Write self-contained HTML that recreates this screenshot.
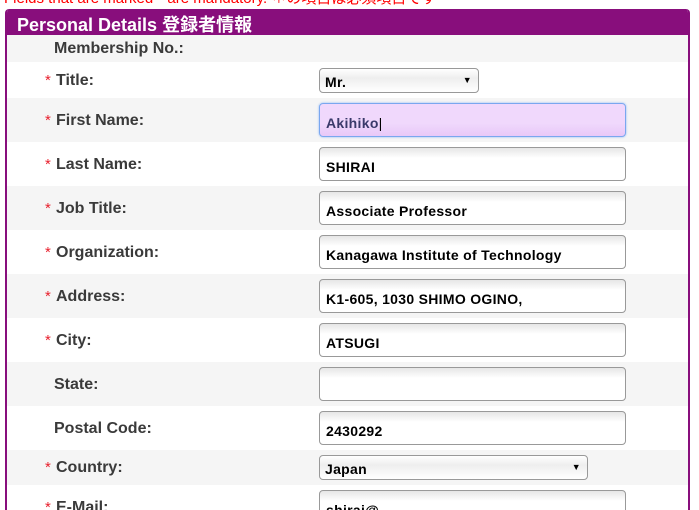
<!DOCTYPE html>
<html><head><meta charset="utf-8"><style>
*{margin:0;padding:0;box-sizing:border-box}
html,body{width:699px;height:510px;overflow:hidden}
body{background:#fff;font-family:"Liberation Sans","Noto Sans CJK JP",sans-serif;position:relative}
.top{position:absolute;left:4px;top:-13px;color:#f00;font-size:15px;white-space:nowrap}
.panel{position:absolute;left:5px;top:9px;width:685px;height:501px;border:2px solid #880e7c;border-top:none;border-bottom:none;border-radius:4px 4px 0 0;overflow:hidden}
.hd{position:absolute;left:-2px;top:0;width:685px;height:26px;background:#880e7c;color:#fff;font-weight:bold;font-size:18px;padding:2px 0 0 12px;border-radius:4px 4px 0 0}
.row{position:absolute;left:0;width:683px}
.g{background:#f5f5f5}
.lb{position:absolute;left:49px;font-size:16px;font-weight:bold;color:#3a3a3a}
.lb b{color:#e8212e;font-weight:normal;position:absolute;left:-11px;top:0px;font-size:15px}
.in{position:absolute;left:312px;width:307px;height:34px;border:1px solid #999;border-radius:4px;background:linear-gradient(#e6e6e6,#fff 10px);font-size:14px;letter-spacing:0.3px;font-weight:bold;color:#000;padding:11px 0 0 6px}
.sel{height:25px;padding:5px 0 0 5px;background:linear-gradient(#fff,#eee 40%,#fff)}
.sel:after{content:"▼";position:absolute;right:6px;top:6px;font-size:9px}
</style></head><body>
<div class="top">Fields that are marked * are mandatory. ＊の項目は必須項目です</div>
<div class="panel">
<div class="hd">Personal Details 登録者情報</div>
<div class="row g" style="top:26px;height:27px"><div class="lb" style="top:5px;left:47px">Membership No.:</div></div>
<div class="row" style="top:53px;height:36px"><div class="lb" style="top:10px"><b>*</b>Title:</div><div class="in sel" style="top:6px;width:160px">Mr.</div></div>
<div class="row g" style="top:89px;height:44px"><div class="lb" style="top:14px"><b>*</b>First Name:</div><div class="in" style="top:5px;background:linear-gradient(#f0d8fc 60%,#e8c8f8);border:1px solid #7aa7ef;box-shadow:0 0 2px #8ab4f8;color:#3a3a6a">Akihiko<span style="font-weight:normal;color:#000">|</span></div></div>
<div class="row" style="top:133px;height:44px"><div class="lb" style="top:14px"><b>*</b>Last Name:</div><div class="in" style="top:5px">SHIRAI</div></div>
<div class="row g" style="top:177px;height:44px"><div class="lb" style="top:14px"><b>*</b>Job Title:</div><div class="in" style="top:5px">Associate Professor</div></div>
<div class="row" style="top:221px;height:44px"><div class="lb" style="top:14px"><b>*</b>Organization:</div><div class="in" style="top:5px">Kanagawa Institute of Technology</div></div>
<div class="row g" style="top:265px;height:44px"><div class="lb" style="top:14px"><b>*</b>Address:</div><div class="in" style="top:5px">K1-605, 1030 SHIMO OGINO,</div></div>
<div class="row" style="top:309px;height:44px"><div class="lb" style="top:14px"><b>*</b>City:</div><div class="in" style="top:5px">ATSUGI</div></div>
<div class="row g" style="top:353px;height:44px"><div class="lb" style="top:14px;left:47px">State:</div><div class="in" style="top:5px"></div></div>
<div class="row" style="top:397px;height:44px"><div class="lb" style="top:14px;left:47px">Postal Code:</div><div class="in" style="top:5px">2430292</div></div>
<div class="row g" style="top:441px;height:35px"><div class="lb" style="top:9px"><b>*</b>Country:</div><div class="in sel" style="top:5px;width:269px">Japan</div></div>
<div class="row" style="top:476px;height:44px"><div class="lb" style="top:14px"><b>*</b>E-Mail:</div><div class="in" style="top:5px">shirai@</div></div>
</div>
</body></html>
